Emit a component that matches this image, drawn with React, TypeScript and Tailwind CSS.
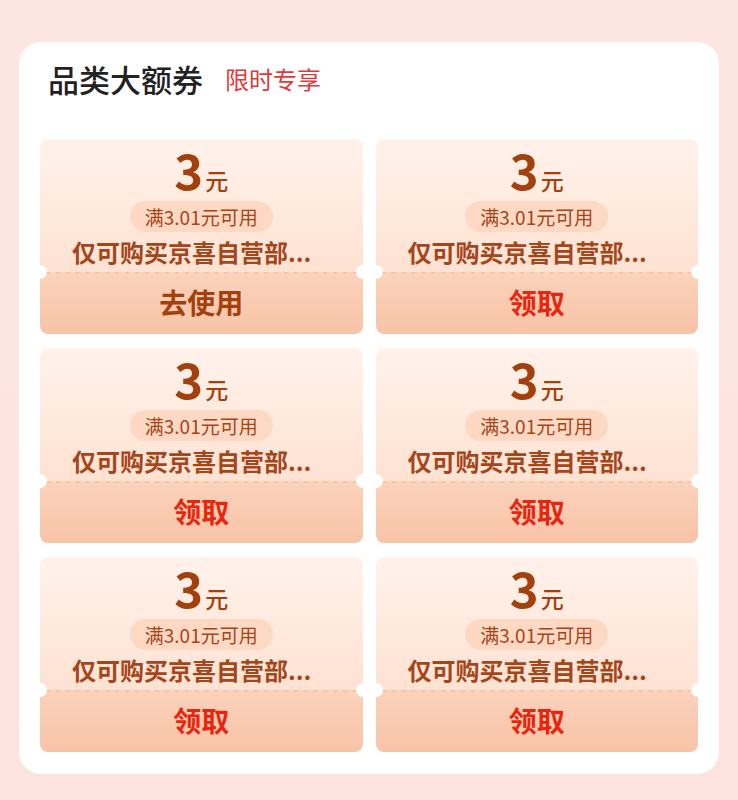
import React from "react";

const font = { fontFamily: '"Noto Sans CJK SC", "Noto Sans", sans-serif' };

function Coupon({ used }: { used: boolean }) {
  return (
    <div className="relative flex h-[195px] flex-col">
      <div className="flex h-[133px] flex-col items-center rounded-t-[8px] bg-gradient-to-b from-[#fff2eb] to-[#fee2d2] pt-[6px]">
        <div className="flex items-baseline leading-none text-[#a3410e]">
          <span className="text-[49px] font-bold leading-[48px]">3</span>
          <span className="ml-[2px] text-[23px] font-medium">元</span>
        </div>
        <div className="mt-[8px] flex h-[31px] items-center rounded-full bg-[#fdd9c4] px-[15px] text-[19px] leading-none text-[#a4461a]">
          满3.01元可用
        </div>
        <div className="mt-[5px] w-full pl-[32px] text-left text-[24px] font-semibold leading-[30px] text-[#a4461a]">
          仅可购买京喜自营部...
        </div>
      </div>
      <div className="flex flex-1 items-center justify-center rounded-b-[8px] border-t-2 border-dashed border-[#f9d3bd] bg-gradient-to-b from-[#fbd2bb] to-[#f7c3a6] pb-[4px]">
        <span className={"text-[28px] font-bold leading-none " + (used ? "text-[#a3410e]" : "text-[#e8260f]")}>
          {used ? "去使用" : "领取"}
        </span>
      </div>
      <div className="absolute left-[-7px] top-[126px] h-[14px] w-[14px] rounded-full bg-white" />
      <div className="absolute right-[-7px] top-[126px] h-[14px] w-[14px] rounded-full bg-white" />
    </div>
  );
}

export default function App() {
  return (
    <div style={font} className="min-h-[800px] w-[738px] bg-gradient-to-b from-[#fde6e1] to-[#fde3df] px-[19px] pt-[42px]">
      <div className="rounded-[22px] bg-white px-[21px] pb-[22px] pt-[20px]">
        <div className="flex items-center pl-[8px]">
          <span className="text-[31px] font-medium leading-[34px] text-[#222]">品类大额券</span>
          <span className="ml-[22px] text-[24px] leading-[34px] text-[#e0393b]">限时专享</span>
        </div>
        <div className="mt-[43px] grid grid-cols-2 gap-x-[13px] gap-y-[14px]">
          <Coupon used />
          <Coupon used={false} />
          <Coupon used={false} />
          <Coupon used={false} />
          <Coupon used={false} />
          <Coupon used={false} />
        </div>
      </div>
    </div>
  );
}
